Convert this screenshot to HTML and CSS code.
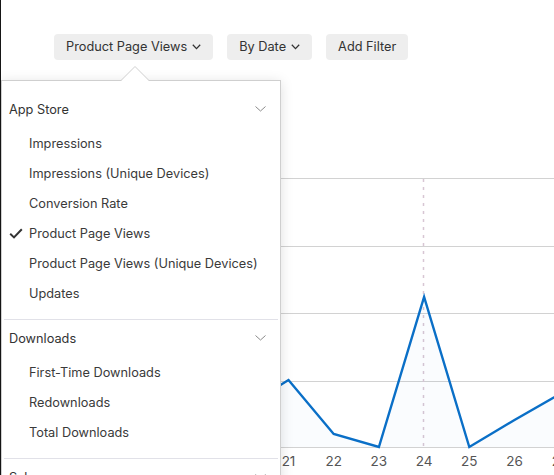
FILE: index.html
```html
<!DOCTYPE html>
<html>
<head>
<meta charset="utf-8">
<link rel="stylesheet" href="styles.css">
</head>
<body>
<div class="page">
  <div class="toolbar">
    <button class="btn">Product Page Views<svg class="btn-chev" width="9" height="6" viewBox="0 0 9 6"><path d="M0.8 0.8 L4.5 4.6 L8.2 0.8" fill="none" stroke="#333" stroke-width="1.3"/></svg></button>
    <button class="btn">By Date<svg class="btn-chev" width="9" height="6" viewBox="0 0 9 6"><path d="M0.8 0.8 L4.5 4.6 L8.2 0.8" fill="none" stroke="#333" stroke-width="1.3"/></svg></button>
    <button class="btn">Add Filter</button>
  </div>

  <div class="chart">
    <svg width="553" height="315" viewBox="1 160 553 315">
      <g stroke="#d2d2d2" stroke-width="1">
        <line x1="0" y1="178.5" x2="554" y2="178.5"/>
        <line x1="0" y1="246.5" x2="554" y2="246.5"/>
        <line x1="0" y1="313.5" x2="554" y2="313.5"/>
        <line x1="0" y1="381.5" x2="554" y2="381.5"/>
        <line x1="0" y1="447.5" x2="554" y2="447.5"/>
      </g>
      <line x1="423.5" y1="179" x2="423.5" y2="447" stroke="#d8c6d4" stroke-width="1.5" stroke-dasharray="3 5"/>
      <polygon points="243.3,408 288.5,380 333.7,434 378.9,447 424.1,297 469.3,447 514.5,420 559.7,394 559.7,447 243.3,447" fill="rgba(0,112,201,0.02)"/>
      <polyline points="243.3,408 288.5,380 333.7,434 378.9,447 424.1,297 469.3,447 514.5,420 559.7,394" fill="none" stroke="#0a6fc7" stroke-width="2.4" stroke-linejoin="miter"/>
      <g class="xlab" font-size="13.5" fill="#555" text-anchor="middle">
        <text x="288.5" y="466">21</text>
        <text x="333.7" y="466">22</text>
        <text x="378.9" y="466">23</text>
        <text x="424.1" y="466">24</text>
        <text x="469.3" y="466">25</text>
        <text x="514.5" y="466">26</text>
        <text x="559.7" y="466">27</text>
      </g>
    </svg>
  </div>

  <div class="panel">
    <svg class="caret" width="28" height="15" viewBox="0 0 28 15"><path d="M0 15 L14 1 L28 15 Z" fill="#fff"/><path d="M0 14.5 L14 0.5 L28 14.5" fill="none" stroke="#cfcfcf" stroke-width="1"/></svg>
    <div class="section">
      <div class="sec-head"><span>App Store</span><svg width="11" height="6" viewBox="0 0 11 6"><path d="M0.5 0.5 L5.5 5 L10.5 0.5" fill="none" stroke="#8a8a8a" stroke-width="1"/></svg></div>
      <ul class="items">
        <li>Impressions</li>
        <li>Impressions (Unique Devices)</li>
        <li>Conversion Rate</li>
        <li class="checked"><svg class="check" width="14" height="11" viewBox="0 0 14 11"><path d="M1.2 5.8 L5 9.4 L12.8 1.2" fill="none" stroke="#333" stroke-width="2"/></svg>Product Page Views</li>
        <li>Product Page Views (Unique Devices)</li>
        <li>Updates</li>
      </ul>
    </div>
    <hr class="divider">
    <div class="section">
      <div class="sec-head"><span>Downloads</span><svg width="11" height="6" viewBox="0 0 11 6"><path d="M0.5 0.5 L5.5 5 L10.5 0.5" fill="none" stroke="#8a8a8a" stroke-width="1"/></svg></div>
      <ul class="items">
        <li>First-Time Downloads</li>
        <li>Redownloads</li>
        <li>Total Downloads</li>
      </ul>
    </div>
    <hr class="divider">
    <div class="section">
      <div class="sec-head"><span>Sales</span><svg width="11" height="6" viewBox="0 0 11 6"><path d="M0.5 0.5 L5.5 5 L10.5 0.5" fill="none" stroke="#8a8a8a" stroke-width="1"/></svg></div>
      <ul class="items">
        <li>Proceeds</li>
        <li>Paying Users</li>
      </ul>
    </div>
  </div>
</div>
</body>
</html>
```

FILE: styles.css
```css
html, body {
  margin: 0;
  padding: 0;
  background: #fff;
}
body {
  width: 554px;
  height: 475px;
  overflow: hidden;
  font-family: Inter, "Noto Sans", "Liberation Sans", sans-serif;
  color: #333;
}
.page {
  position: relative;
  height: 475px;
  border-left: 1px solid #161616;
  box-sizing: border-box;
}
.toolbar {
  display: flex;
  gap: 14px;
  padding: 34px 0 0 53px;
}
.btn {
  display: flex;
  align-items: center;
  gap: 5px;
  height: 26px;
  padding: 0 12px 1px;
  border: 0;
  border-radius: 4px;
  background: #eeeeee;
  font-family: inherit;
  font-size: 12.75px;
  color: #333;
  cursor: pointer;
}
.btn-chev {
  display: block;
  margin-top: 1px;
}
.chart {
  margin-top: 100px;
}
.chart svg {
  display: block;
}
.xlab text {
  font-family: Inter, "Noto Sans", "Liberation Sans", sans-serif;
}
.panel {
  position: absolute;
  left: 0;
  top: 80px;
  width: 278px;
  padding-top: 10px;
  background: #fff;
  border: 1px solid #cfcfcf;
  box-shadow: 0 2px 12px rgba(0, 0, 0, 0.13);
  font-size: 12.75px;
}
.caret {
  position: absolute;
  left: 119px;
  top: -15px;
  display: block;
}
.section {
  padding: 3px 0 11px;
}
.sec-head {
  display: flex;
  align-items: center;
  justify-content: space-between;
  height: 30px;
  padding: 0 14px 0 7px;
  color: #333;
}
.sec-head svg {
  display: block;
}
.items {
  list-style: none;
  margin: 0;
  padding: 4px 0 0;
}
.items li {
  position: relative;
  height: 30px;
  line-height: 32px;
  padding-left: 27px;
  color: #3a3a3a;
}
.check {
  position: absolute;
  left: 7px;
  top: 10px;
}
.divider {
  margin: 0 2px;
  border: 0;
  border-top: 1px solid #e1e1e8;
  height: 0;
}
```
